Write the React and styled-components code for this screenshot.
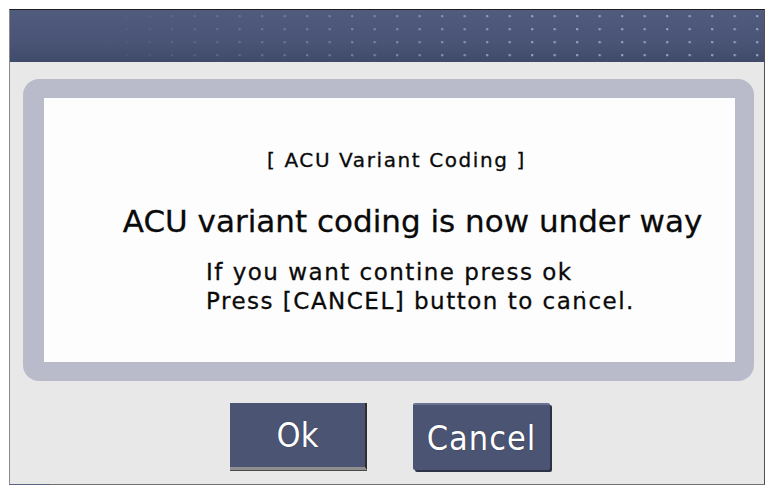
import React from "react";
import styled, { createGlobalStyle } from "styled-components";

const GlobalStyle = createGlobalStyle`
  html, body {
    margin: 0;
    padding: 0;
    background: #ffffff;
  }
  #root {
    padding: 9px;
  }
`;

const Frame = styled.div`
  position: relative;
  width: 754px;
  height: 474px;
  display: flex;
  flex-direction: column;
  background: #e8e8e8;
  border-top: 1px solid #1e1e1e;
  border-left: 1px solid #8a8a8a;
  border-right: 1px solid #505050;
  border-bottom: 1px solid #727272;

  &::after {
    content: "";
    position: absolute;
    left: 0;
    bottom: -1px;
    width: 40px;
    height: 1px;
    background: #5b6282;
  }
`;

const Header = styled.div`
  position: relative;
  height: 52px;
  flex: none;
  background: linear-gradient(to bottom, #505b7e 0%, #4a5476 60%, #404a69 100%);

  &::after {
    content: "";
    position: absolute;
    inset: 0;
    background-image: radial-gradient(
      circle at 1.2px 1.2px,
      rgba(160, 170, 196, 0.85) 0.9px,
      rgba(160, 170, 196, 0) 1.6px
    );
    background-size: 22.5px 13px;
    background-position: 3.5px 5px;
    -webkit-mask-image: linear-gradient(to right, transparent 10%, rgba(0, 0, 0, 0.45) 35%, #000 70%);
    mask-image: linear-gradient(to right, transparent 10%, rgba(0, 0, 0, 0.45) 35%, #000 70%);
  }
`;

const Body = styled.div`
  flex: 1;
  display: flex;
  flex-direction: column;
  padding: 17px 10px 14px 13px;
`;

const Panel = styled.div`
  height: 302px;
  box-sizing: border-box;
  padding: 19px 19px 19px 21px;
  background: #b9bbcb;
  border-radius: 16px;
`;

const Message = styled.div`
  position: relative;
  height: 100%;
  box-sizing: border-box;
  padding-top: 50px;
  background: #fdfdfd;
  color: #0a0a0a;
  font-family: "DejaVu Sans", "Liberation Sans", sans-serif;
  -webkit-text-stroke: 0.3px #0a0a0a;
`;

const Title = styled.div`
  font-size: 20px;
  line-height: 24px;
  letter-spacing: 1.6px;
  text-align: center;
  padding-left: 14px;
`;

const Headline = styled.div`
  margin-top: 31px;
  font-size: 31px;
  line-height: 36px;
  text-align: center;
  padding-left: 46px;
`;

const Notes = styled.div`
  margin-top: 19px;
  margin-left: 162px;
  font-size: 23px;
  line-height: 29px;
  letter-spacing: 1.5px;
`;

const Stray = styled.span`
  position: absolute;
  left: 538px;
  top: 193px;
  width: 2px;
  height: 2px;
  background: #555;
`;

const ButtonRow = styled.div`
  margin-top: 22px;
  display: flex;
  justify-content: center;
  gap: 46px;
  padding-left: 3px;
`;

const Button = styled.button`
  width: 137px;
  height: 67px;
  box-sizing: border-box;
  padding: 0;
  background: #4b5573;
  color: #ffffff;
  font-family: "DejaVu Sans Condensed", "DejaVu Sans", sans-serif;
  font-size: 34px;
  letter-spacing: ${(p) => (p.$variant === "raised" ? "1px" : "0")};
  text-shadow: 0 0 1px #1c2233;
  cursor: pointer;
  border: none;
  ${(p) =>
    p.$variant === "raised"
      ? `
    border-radius: 2px;
    border-top: 2px solid #6b7394;
    box-shadow: 2px 2px 0 #2c3248;
  `
      : `
    border-right: 2px solid #2e2e2e;
    border-bottom: 3px solid #8f8f8f;
    box-shadow: 0 1px 0 #4a4a4a;
  `}
`;

export default function App() {
  return (
    <>
      <GlobalStyle />
      <Frame>
        <Header />
        <Body>
          <Panel>
            <Message>
              <Title>[ ACU Variant Coding ]</Title>
              <Headline>ACU variant coding is now under way</Headline>
              <Notes>
                If you want contine press ok
                <br />
                Press [CANCEL] button to cancel.
              </Notes>
              <Stray />
            </Message>
          </Panel>
          <ButtonRow>
            <Button>Ok</Button>
            <Button $variant="raised">Cancel</Button>
          </ButtonRow>
        </Body>
      </Frame>
    </>
  );
}
